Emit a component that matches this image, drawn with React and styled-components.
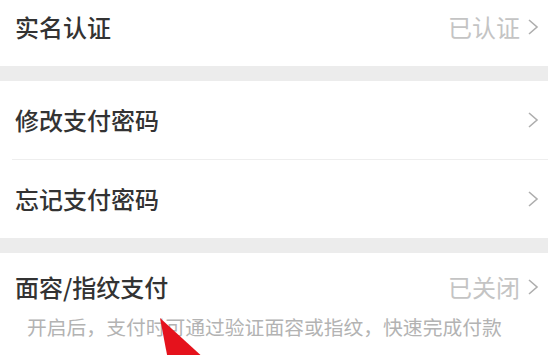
import React from "react";
import styled, { createGlobalStyle } from "styled-components";

const GlobalStyle = createGlobalStyle`
  html, body {
    margin: 0;
    padding: 0;
    background: #fff;
    overflow: hidden;
  }
  body {
    font-family: "Noto Sans CJK SC", "Noto Sans", sans-serif;
  }
`;

const Screen = styled.div`
  position: relative;
  width: 548px;
  height: 355px;
  overflow: hidden;
  background: #fff;
`;

/* the list is scrolled a little, so the first row is cut at the top */
const List = styled.div`
  display: flex;
  flex-direction: column;
  margin-top: -12px;
`;

const Gap = styled.div`
  height: 15px;
  background: #ececec;
`;

const Row = styled.div`
  height: 78px;
  display: flex;
  align-items: center;
  justify-content: space-between;
  padding: 0 9px 0 15px;
  box-sizing: border-box;
`;

const Divider = styled.div`
  height: 1px;
  margin-left: 12px;
  background: #eeeeee;
`;

const Title = styled.span`
  font-size: 24px;
  font-weight: 500;
  color: #333;
  line-height: 34px;
`;

const Meta = styled.span`
  display: flex;
  align-items: center;
  gap: 7px;
  font-size: 24px;
  color: #c4c4c4;
  line-height: 34px;
`;

const Section = styled.div`
  display: flex;
  flex-direction: column;
  padding: 17px 9px 0 15px;
  gap: 9px;
`;

const SectionHead = styled.div`
  display: flex;
  align-items: center;
  justify-content: space-between;
`;

const Note = styled.div`
  padding-left: 12px;
  font-size: 19.8px;
  line-height: 28px;
  color: #b3b3b3;
  white-space: nowrap;
`;

const Pointer = styled.svg`
  position: absolute;
  left: 150px;
  top: 310px;
  width: 70px;
  height: 50px;
`;

const Chevron = () => (
  <svg width="12" height="18" viewBox="0 0 12 18">
    <path d="M2 2 L10 9 L2 16" fill="none" stroke="#aeaeae" strokeWidth="1.6" />
  </svg>
);

export default function App() {
  return (
    <Screen>
      <GlobalStyle />
      <List>
        <Row>
          <Title>实名认证</Title>
          <Meta>
            已认证
            <Chevron />
          </Meta>
        </Row>
        <Gap />
        <Row>
          <Title>修改支付密码</Title>
          <Meta>
            <Chevron />
          </Meta>
        </Row>
        <Divider />
        <Row>
          <Title>忘记支付密码</Title>
          <Meta>
            <Chevron />
          </Meta>
        </Row>
        <Gap />
        <Section>
          <SectionHead>
            <Title>面容/指纹支付</Title>
            <Meta>
              已关闭
              <Chevron />
            </Meta>
          </SectionHead>
          <Note>开启后，支付时可通过验证面容或指纹，快速完成付款</Note>
        </Section>
      </List>
      <Pointer viewBox="0 0 70 50">
        <polygon points="10,8 18,50 56,50" fill="#e5121c" />
      </Pointer>
    </Screen>
  );
}
